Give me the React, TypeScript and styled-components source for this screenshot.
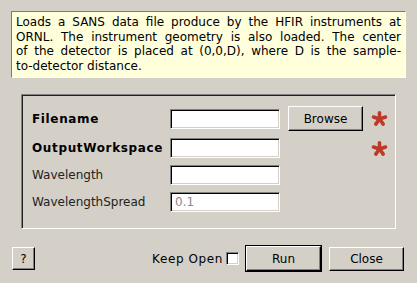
import styled, { createGlobalStyle, css } from "styled-components";

const GlobalStyle = createGlobalStyle`
  html, body {
    margin: 0;
    padding: 0;
    background: #d4d0c8;
  }
  body {
    font-family: "DejaVu Sans", "Liberation Sans", sans-serif;
    font-size: 12px;
    color: #000;
  }
`;

const Dialog = styled.div`
  width: 417px;
  height: 283px;
  display: flex;
  flex-direction: column;
  box-sizing: border-box;
  padding: 11px 0 0;
`;

const Description = styled.div`
  margin: 0 11px;
  padding: 3px 4px 4px;
  background: #ffffdc;
  border-top: 1px solid #7a7a7a;
  border-left: 1px solid #7a7a7a;
  border-right: 1px solid #ffffff;
  border-bottom: 1px solid #ffffff;
  line-height: 14.5px;
  height: 67px;
  box-sizing: border-box;
`;

const DescLine = styled.div<{ $last?: boolean }>`
  white-space: nowrap;
  text-align: justify;
  text-align-last: ${(p) => (p.$last ? "left" : "justify")};
`;

const Group = styled.div`
  margin: 16px 21px 0;
  height: 135px;
  box-sizing: border-box;
  padding: 11px 0 0 10px;
  border-top: 1px solid #808080;
  border-left: 1px solid #808080;
  border-right: 1px solid #ffffff;
  border-bottom: 1px solid #ffffff;
  box-shadow: inset 1px 1px 0 #202020;
  display: grid;
  grid-template-columns: 130px 110px 75px 1fr;
  grid-auto-rows: min-content;
  column-gap: 8px;
  row-gap: 7px;
  align-items: center;
`;

const Label = styled.div<{ $bold?: boolean }>`
  font-weight: ${(p) => (p.$bold ? "bold" : "normal")};
  letter-spacing: ${(p) => (p.$bold ? "0.65px" : "0")};
  white-space: nowrap;
  color: ${(p) => (p.$bold ? "#000" : "#222")};
`;

const Field = styled.div<{ $disabled?: boolean }>`
  height: 20px;
  box-sizing: border-box;
  background: #ffffff;
  border-top: 1px solid #808080;
  border-left: 1px solid #808080;
  border-right: 1px solid #ffffff;
  border-bottom: 1px solid #ffffff;
  box-shadow: inset 1px 1px 0 #000, inset -1px -1px 0 #d4d0c8;
  padding: 0 4px;
  line-height: 18px;
  color: ${(p) => (p.$disabled ? "#8a8a8a" : "#000")};
`;

const buttonBase = css`
  box-sizing: border-box;
  background: #d4d0c8;
  font-family: inherit;
  font-size: 12px;
  color: #000;
  padding: 0;
  border-top: 1px solid #ffffff;
  border-left: 1px solid #ffffff;
  border-right: 1px solid #000;
  border-bottom: 1px solid #000;
  box-shadow: inset -1px -1px 0 #808080;
  display: flex;
  align-items: center;
  justify-content: center;
`;

const Button = styled.button<{ $w: number; $h: number }>`
  ${buttonBase};
  width: ${(p) => p.$w}px;
  height: ${(p) => p.$h}px;
`;

const DefaultButton = styled.button<{ $w: number; $h: number }>`
  ${buttonBase};
  width: ${(p) => p.$w}px;
  height: ${(p) => p.$h}px;
  box-shadow: 0 0 0 1px #000, inset -1px -1px 0 #808080;
`;

const Star = styled.div`
  display: flex;
  align-items: center;
  height: 20px;
`;

const Footer = styled.div`
  display: flex;
  align-items: center;
  margin-top: 16px;
  padding: 0 13px 0 12px;
  height: 27px;
`;

const Spacer = styled.div<{ $w?: number }>`
  flex: ${(p) => (p.$w ? `0 0 ${p.$w}px` : "1")};
`;

const KeepOpen = styled.label`
  display: flex;
  align-items: center;
  gap: 3px;
  margin-right: 7px;
  letter-spacing: 0.6px;
`;

const Check = styled.span`
  width: 13px;
  height: 13px;
  box-sizing: border-box;
  background: #fff;
  border-top: 1px solid #808080;
  border-left: 1px solid #808080;
  border-right: 1px solid #fff;
  border-bottom: 1px solid #fff;
  box-shadow: inset 1px 1px 0 #000, inset -1px -1px 0 #d4d0c8;
`;

const RequiredStar = () => (
  <svg width="17" height="17" viewBox="0 0 17 17">
    <g stroke="#be3a28" strokeWidth="3.6" strokeLinecap="round">
      {[-90, -18, 54, 126, 198].map((a) => {
        const r = (a * Math.PI) / 180;
        return (
          <line key={a} x1="8.5" y1="9" x2={8.5 + 6.3 * Math.cos(r)} y2={9 + 6.3 * Math.sin(r)} />
        );
      })}
    </g>
  </svg>
);

export default function App() {
  return (
    <Dialog>
      <GlobalStyle />
      <Description>
        <DescLine>Loads a SANS data file produce by the HFIR instruments at</DescLine>
        <DescLine>ORNL. The instrument geometry is also loaded. The center</DescLine>
        <DescLine>of the detector is placed at (0,0,D), where D is the sample-</DescLine>
        <DescLine $last>to-detector distance.</DescLine>
      </Description>
      <Group>
        <Label $bold>Filename</Label>
        <Field />
        <Button $w={75} $h={25}>Browse</Button>
        <Star><RequiredStar /></Star>

        <Label $bold>OutputWorkspace</Label>
        <Field />
        <div />
        <Star><RequiredStar /></Star>

        <Label>Wavelength</Label>
        <Field />
        <div />
        <div />

        <Label>WavelengthSpread</Label>
        <Field $disabled>0.1</Field>
        <div />
        <div />
      </Group>
      <Footer>
        <Button $w={23} $h={23}>?</Button>
        <Spacer />
        <KeepOpen>
          Keep Open <Check />
        </KeepOpen>
        <DefaultButton $w={75} $h={25}>Run</DefaultButton>
        <Spacer $w={8} />
        <Button $w={75} $h={24}>Close</Button>
      </Footer>
    </Dialog>
  );
}
